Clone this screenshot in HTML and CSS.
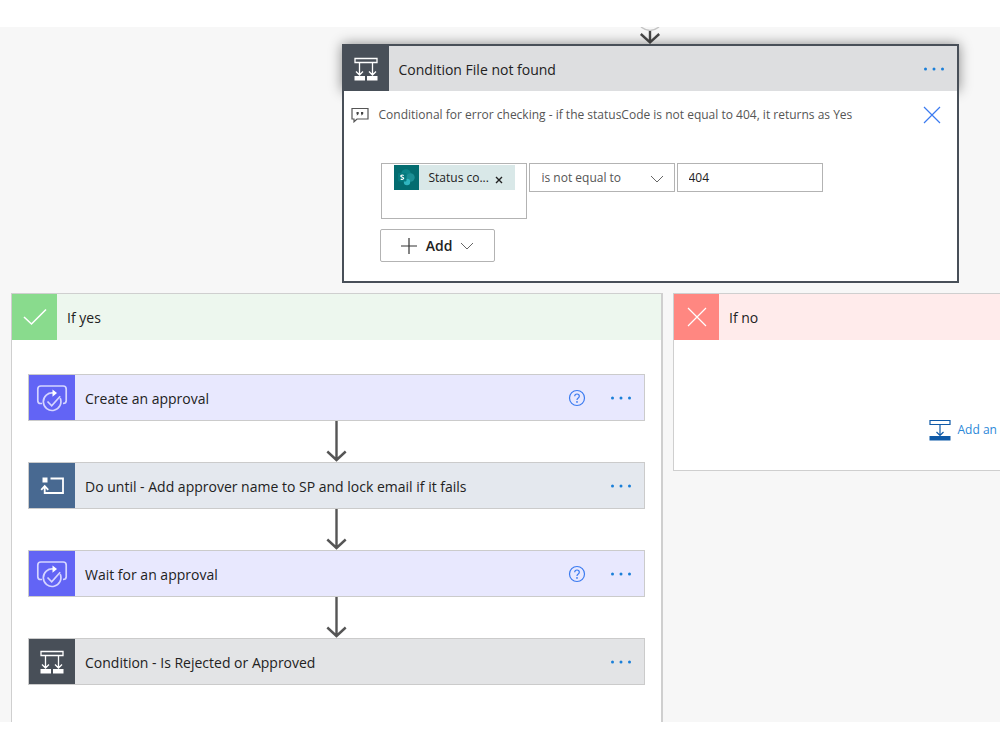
FILE: index.html
```html
<!DOCTYPE html>
<html lang="en">
<head>
    <meta charset="UTF-8">
    <meta name="viewport" content="width=device-width, initial-scale=1.0">
    <title>Flow designer</title>
    <link rel="stylesheet" href="styles.css">
</head>
<body>
    <!-- Shared icons -->
    <svg class="sprite" aria-hidden="true">
        <symbol id="icon-condition" viewBox="0 0 24 24">
            <path d="M1 1.500h22v4H1zM5.500 6v12M18.500 6v12M2 14.500l3.500 3.500 3.500-3.500M15 14.500l3.500 3.500 3.500-3.500" fill="none" stroke="#fff" stroke-width="1.300"/>
            <path d="M.5 19h10.500v4.500H.5zM13 19h10.500v4.500H13z" fill="#fff"/>
        </symbol>
        <symbol id="icon-approval" viewBox="0 0 32 28">
            <g fill="none" stroke="#d5d5ff" stroke-width="1.700">
                <path d="M6 19.500H4.500Q1.800 19.500 1.800 16.800V5Q1.800 2 4.800 2h22.400Q30.200 2 30.200 5v11.800Q30.200 19.500 27 19.500"/>
                <path d="M17.500 9A8.800 8.800 0 1 0 24.200 14.200"/>
                <path d="M11.500 17.500l4.200 4.300 8.500-9.600"/>
            </g>
            <path d="M16.500 5.500l4.500 3.600-4.500 3.600z" fill="#fff"/>
        </symbol>
        <symbol id="icon-until" viewBox="0 0 24 20">
            <path d="M2.500 1.500h5v5h-5z" fill="#fff"/>
            <path d="M10.500 2.500h12.500v14.500H4.700V10.500M1.200 13.800l3.500-3.800 3.500 3.800" fill="none" stroke="#fff" stroke-width="1.800"/>
        </symbol>
        <symbol id="icon-dots" viewBox="0 0 22 6">
            <g fill="#1a7fd8"><circle cx="2.500" cy="3" r="1.500"/><circle cx="11" cy="3" r="1.500"/><circle cx="19.500" cy="3" r="1.500"/></g>
        </symbol>
        <symbol id="icon-help" viewBox="0 0 18 18">
            <circle cx="9" cy="9" r="7.500" fill="none" stroke="#3b7bf0" stroke-width="1.200"/>
            <path d="M6.700 7.300Q6.700 5 9 5t2.300 2.200Q11.300 8.300 10 9.200 9 9.900 9 11" fill="none" stroke="#3b7bf0" stroke-width="1.200"/>
            <circle cx="9" cy="12.900" r=".9" fill="#3b7bf0"/>
        </symbol>
        <symbol id="icon-arrow" viewBox="0 0 22 41">
            <path d="M10.500 0v39M1.300 30.500L10.500 39l9.200-8.500" fill="none" stroke="#555" stroke-width="2.400"/>
        </symbol>
        <symbol id="icon-chevron" viewBox="0 0 14 8">
            <path d="M1 1l6 6 6-6" fill="none" stroke="#666" stroke-width="1"/>
        </symbol>
    </svg>

    <main class="canvas">
        <div class="flow">
            <svg class="incoming" viewBox="0 0 22 17" aria-hidden="true">
                <path d="M2 0Q11 7 20 0" fill="none" stroke="#c4c4c4" stroke-width="1.500"/>
                <path d="M11 4v11M1.800 7L11 15.300 20.200 7" fill="none" stroke="#484848" stroke-width="2.400"/>
            </svg>

            <!-- Selected condition -->
            <section class="condition">
                <header class="condition-header">
                    <span class="tile tile-dark"><svg width="24" height="24"><use href="#icon-condition"/></svg></span>
                    <h2 class="title">Condition File not found</h2>
                    <button class="icon-btn" aria-label="More commands"><svg width="22" height="6"><use href="#icon-dots"/></svg></button>
                </header>
                <div class="condition-body">
                    <div class="note">
                        <svg class="note-icon" width="18" height="16" viewBox="0 0 18 16" aria-hidden="true">
                            <path d="M1 1.500h16v10.500H6l-3 2.800V12H1z" fill="none" stroke="#555" stroke-width="1.200"/>
                            <path d="M5.500 5h2.200v2l-1.400 1.300h-.8l.6-1.300h-.6zM10 5h2.200v2l-1.400 1.300H10l.6-1.300H10z" fill="#444"/>
                        </svg>
                        <p class="note-text">Conditional for error checking - if the statusCode is not equal to 404, it returns as Yes</p>
                        <button class="icon-btn" aria-label="Remove comment">
                            <svg width="18" height="18" viewBox="0 0 18 18"><path d="M1 1l16 16M17 1L1 17" stroke="#3b7bf0" stroke-width="1.200"/></svg>
                        </button>
                    </div>
                    <div class="fields">
                        <div class="field field-token">
                            <span class="token">
                                <svg class="token-icon" width="25" height="25" viewBox="0 0 25 25" aria-hidden="true">
                                    <rect width="25" height="25" fill="#036c70"/>
                                    <circle cx="12" cy="9" r="4.800" fill="#0b8387"/>
                                    <circle cx="16.500" cy="12.500" r="4.200" fill="#1c8f95"/>
                                    <circle cx="13" cy="17" r="3.200" fill="#30b5bf"/>
                                    <rect x="4" y="8" width="8.500" height="8.500" rx="1" fill="#047a7e"/>
                                    <path d="M9.700 10.500Q8 9.500 7.100 10.500T8.300 12.200 9.300 13.900 6.700 14" fill="none" stroke="#fff" stroke-width="1.200"/>
                                </svg>
                                <span class="token-text">Status co...</span>
                                <button class="token-remove" aria-label="Remove Status code">
                                    <svg width="8" height="8" viewBox="0 0 8 8"><path d="M1 1l6 6M7 1L1 7" stroke="#222" stroke-width="1.400"/></svg>
                                </button>
                            </span>
                        </div>
                        <div class="select-wrap">
                            <select class="field field-select" aria-label="Operator">
                                <option>is not equal to</option>
                            </select>
                            <svg class="select-chevron" width="14" height="8"><use href="#icon-chevron"/></svg>
                        </div>
                        <input class="field field-input" type="text" value="404" aria-label="Value">
                    </div>
                    <button class="add-btn">
                        <svg width="18" height="18" viewBox="0 0 18 18"><path d="M9 1v16M1 9h16" stroke="#333" stroke-width="1.200"/></svg>
                        <span>Add</span>
                        <svg width="14" height="8"><use href="#icon-chevron"/></svg>
                    </button>
                </div>
            </section>

            <div class="branches">
                <!-- Yes branch -->
                <section class="branch branch-yes">
                    <header class="branch-header">
                        <span class="tile tile-green">
                            <svg width="24" height="18" viewBox="0 0 24 18"><path d="M1 9l7.500 7L23 1.500" fill="none" stroke="#fff" stroke-width="1.600"/></svg>
                        </span>
                        <h2 class="title">If yes</h2>
                    </header>
                    <div class="steps">
                        <article class="step step-approval">
                            <span class="tile tile-violet"><svg width="32" height="28"><use href="#icon-approval"/></svg></span>
                            <h3 class="title">Create an approval</h3>
                            <button class="icon-btn" aria-label="Help"><svg width="18" height="18"><use href="#icon-help"/></svg></button>
                            <button class="icon-btn" aria-label="More commands"><svg width="22" height="6"><use href="#icon-dots"/></svg></button>
                        </article>
                        <svg class="connector"><use href="#icon-arrow"/></svg>
                        <article class="step step-until">
                            <span class="tile tile-blue"><svg width="24" height="20"><use href="#icon-until"/></svg></span>
                            <h3 class="title">Do until - Add approver name to SP and lock email if it fails</h3>
                            <button class="icon-btn" aria-label="More commands"><svg width="22" height="6"><use href="#icon-dots"/></svg></button>
                        </article>
                        <svg class="connector"><use href="#icon-arrow"/></svg>
                        <article class="step step-approval">
                            <span class="tile tile-violet"><svg width="32" height="28"><use href="#icon-approval"/></svg></span>
                            <h3 class="title">Wait for an approval</h3>
                            <button class="icon-btn" aria-label="Help"><svg width="18" height="18"><use href="#icon-help"/></svg></button>
                            <button class="icon-btn" aria-label="More commands"><svg width="22" height="6"><use href="#icon-dots"/></svg></button>
                        </article>
                        <svg class="connector"><use href="#icon-arrow"/></svg>
                        <article class="step step-condition">
                            <span class="tile tile-dark"><svg width="24" height="24"><use href="#icon-condition"/></svg></span>
                            <h3 class="title">Condition - Is Rejected or Approved</h3>
                            <button class="icon-btn" aria-label="More commands"><svg width="22" height="6"><use href="#icon-dots"/></svg></button>
                        </article>
                    </div>
                </section>

                <!-- No branch -->
                <section class="branch branch-no">
                    <header class="branch-header">
                        <span class="tile tile-red">
                            <svg width="20" height="20" viewBox="0 0 20 20"><path d="M1 1l18 18M19 1L1 19" stroke="#fff" stroke-width="1.200"/></svg>
                        </span>
                        <h2 class="title">If no</h2>
                    </header>
                    <div class="branch-empty">
                        <a class="add-link" href="#">
                            <svg width="22" height="22" viewBox="0 0 22 22" aria-hidden="true">
                                <path d="M1 1.500h20v4H1zM11 5.500V16M7.500 13l3.500 3.500 3.500-3.500" fill="none" stroke="#0f5aa8" stroke-width="1.200"/>
                                <path d="M.5 17h21v4.500H.5z" fill="#0f5aa8"/>
                            </svg>
                            <span>Add an</span>
                        </a>
                    </div>
                </section>
            </div>
        </div>
    </main>
</body>
</html>
```
FILE: styles.css
```css
* {
    margin: 0;
    padding: 0;
    box-sizing: border-box;
}

body {
    display: flex;
    height: 100vh;
    padding: 27px 0 28px;
    background: #fff;
    color: #222;
    font-family: "Open Sans", "Noto Sans", sans-serif;
    font-size: 14px;
    overflow: hidden;
}

button,
input,
select {
    font-family: inherit;
    color: inherit;
}

svg {
    display: block;
    flex: none;
}

.sprite {
    position: absolute;
    width: 0;
    height: 0;
}

.canvas {
    flex: 1;
    min-width: 0;
    padding-left: 11px;
    background: #f7f7f7;
    overflow: hidden;
}

.flow {
    display: flex;
    flex-direction: column;
    align-items: center;
    width: 1278px;
}

.incoming {
    width: 22px;
    height: 17px;
}

.title {
    flex: 1;
    padding: 2px 0 0 10px;
    font-size: 14px;
    font-weight: 400;
    line-height: 20px;
    white-space: nowrap;
}

.icon-btn {
    border: none;
    background: none;
    cursor: pointer;
}

/* Square icon tiles */
.tile {
    display: flex;
    flex: none;
    align-items: center;
    justify-content: center;
    align-self: stretch;
    width: 46px;
}

.tile-dark { background: #484f58; }
.tile-green { background: #89db8d; }
.tile-red { background: #ff8781; }
.tile-violet { background: #6264f5; }
.tile-blue { background: #486991; }

/* Selected condition card */
.condition {
    width: 617px;
}

.condition-header {
    display: flex;
    align-items: center;
    height: 47px;
    padding-right: 12px;
    border: 2px solid #484f58;
    border-bottom: none;
    background: #dddee0;
    box-shadow: 0 0 12px rgba(0, 0, 0, 0.45);
}

.condition-header .tile {
    width: 45px;
}

.condition-body {
    position: relative;
    padding-bottom: 19px;
    border: 2px solid #484f58;
    border-top: none;
    background: #fff;
}

.note {
    display: flex;
    align-items: center;
    height: 47px;
    padding: 0 16px 0 7px;
}

.note-text {
    flex: 1;
    padding-left: 10px;
    color: #555;
    font-size: 12px;
    line-height: 16px;
}

.fields {
    display: flex;
    align-items: flex-start;
    gap: 2px;
    margin: 25px 0 10px 37px;
}

.field {
    width: 146px;
    height: 29px;
    border: 1px solid #b3b3b3;
    border-radius: 0;
    background: #fff;
    font-size: 12px;
}

.field-token {
    height: 56px;
    padding: 1px 11px 0 12px;
}

.token {
    display: flex;
    align-items: center;
    height: 25px;
    padding-right: 12px;
    background: #d9e8e8;
}

.token-text {
    flex: 1;
    padding-left: 10px;
    white-space: nowrap;
}

.token-remove {
    padding-top: 4px;
    border: none;
    background: none;
}

.select-wrap {
    position: relative;
}

.field-select {
    display: block;
    padding: 0 30px 0 12px;
    color: #555;
    appearance: none;
}

.select-chevron {
    position: absolute;
    top: 12px;
    right: 11px;
    pointer-events: none;
}

.field-input {
    padding: 0 11px;
}

.add-btn {
    display: flex;
    align-items: center;
    justify-content: center;
    gap: 8px;
    width: 115px;
    height: 33px;
    margin-left: 36px;
    border: 1px solid #b3b3b3;
    border-radius: 2px;
    background: #fff;
    font-size: 14px;
    font-weight: 600;
}

/* Branches */
.branches {
    display: flex;
    align-items: flex-start;
    gap: 10px;
    width: 100%;
    margin-top: 10px;
}

.branch {
    border: 1px solid #cfcfcf;
    background: #fff;
}

.branch-yes {
    width: 652px;
    border-right-width: 2px;
}

.branch-no {
    flex: 1;
}

.branch-header {
    display: flex;
    align-items: center;
    height: 46px;
    background: #edf7ee;
}

.branch-header .tile {
    width: 45px;
}

.branch-no .branch-header {
    background: #ffebeb;
}

.steps {
    display: flex;
    flex-direction: column;
    align-items: center;
    padding: 34px 16px 60px;
}

.step {
    display: flex;
    align-items: center;
    width: 100%;
    height: 47px;
    padding-right: 12px;
    border: 1px solid #cbcbcb;
}

.step .icon-btn + .icon-btn {
    margin-left: 24px;
}

.step-approval { background: #e8e8fe; }
.step-until { background: #e4e8ee; }
.step-condition { background: #e3e4e6; }

.connector {
    width: 22px;
    height: 41px;
}

.branch-empty {
    display: flex;
    justify-content: center;
    padding: 79px 0 29px;
}

.add-link {
    display: flex;
    align-items: center;
    gap: 7px;
    width: 105px;
    color: #2b88d8;
    font-size: 12px;
    line-height: 22px;
    text-decoration: none;
    white-space: nowrap;
}
```
